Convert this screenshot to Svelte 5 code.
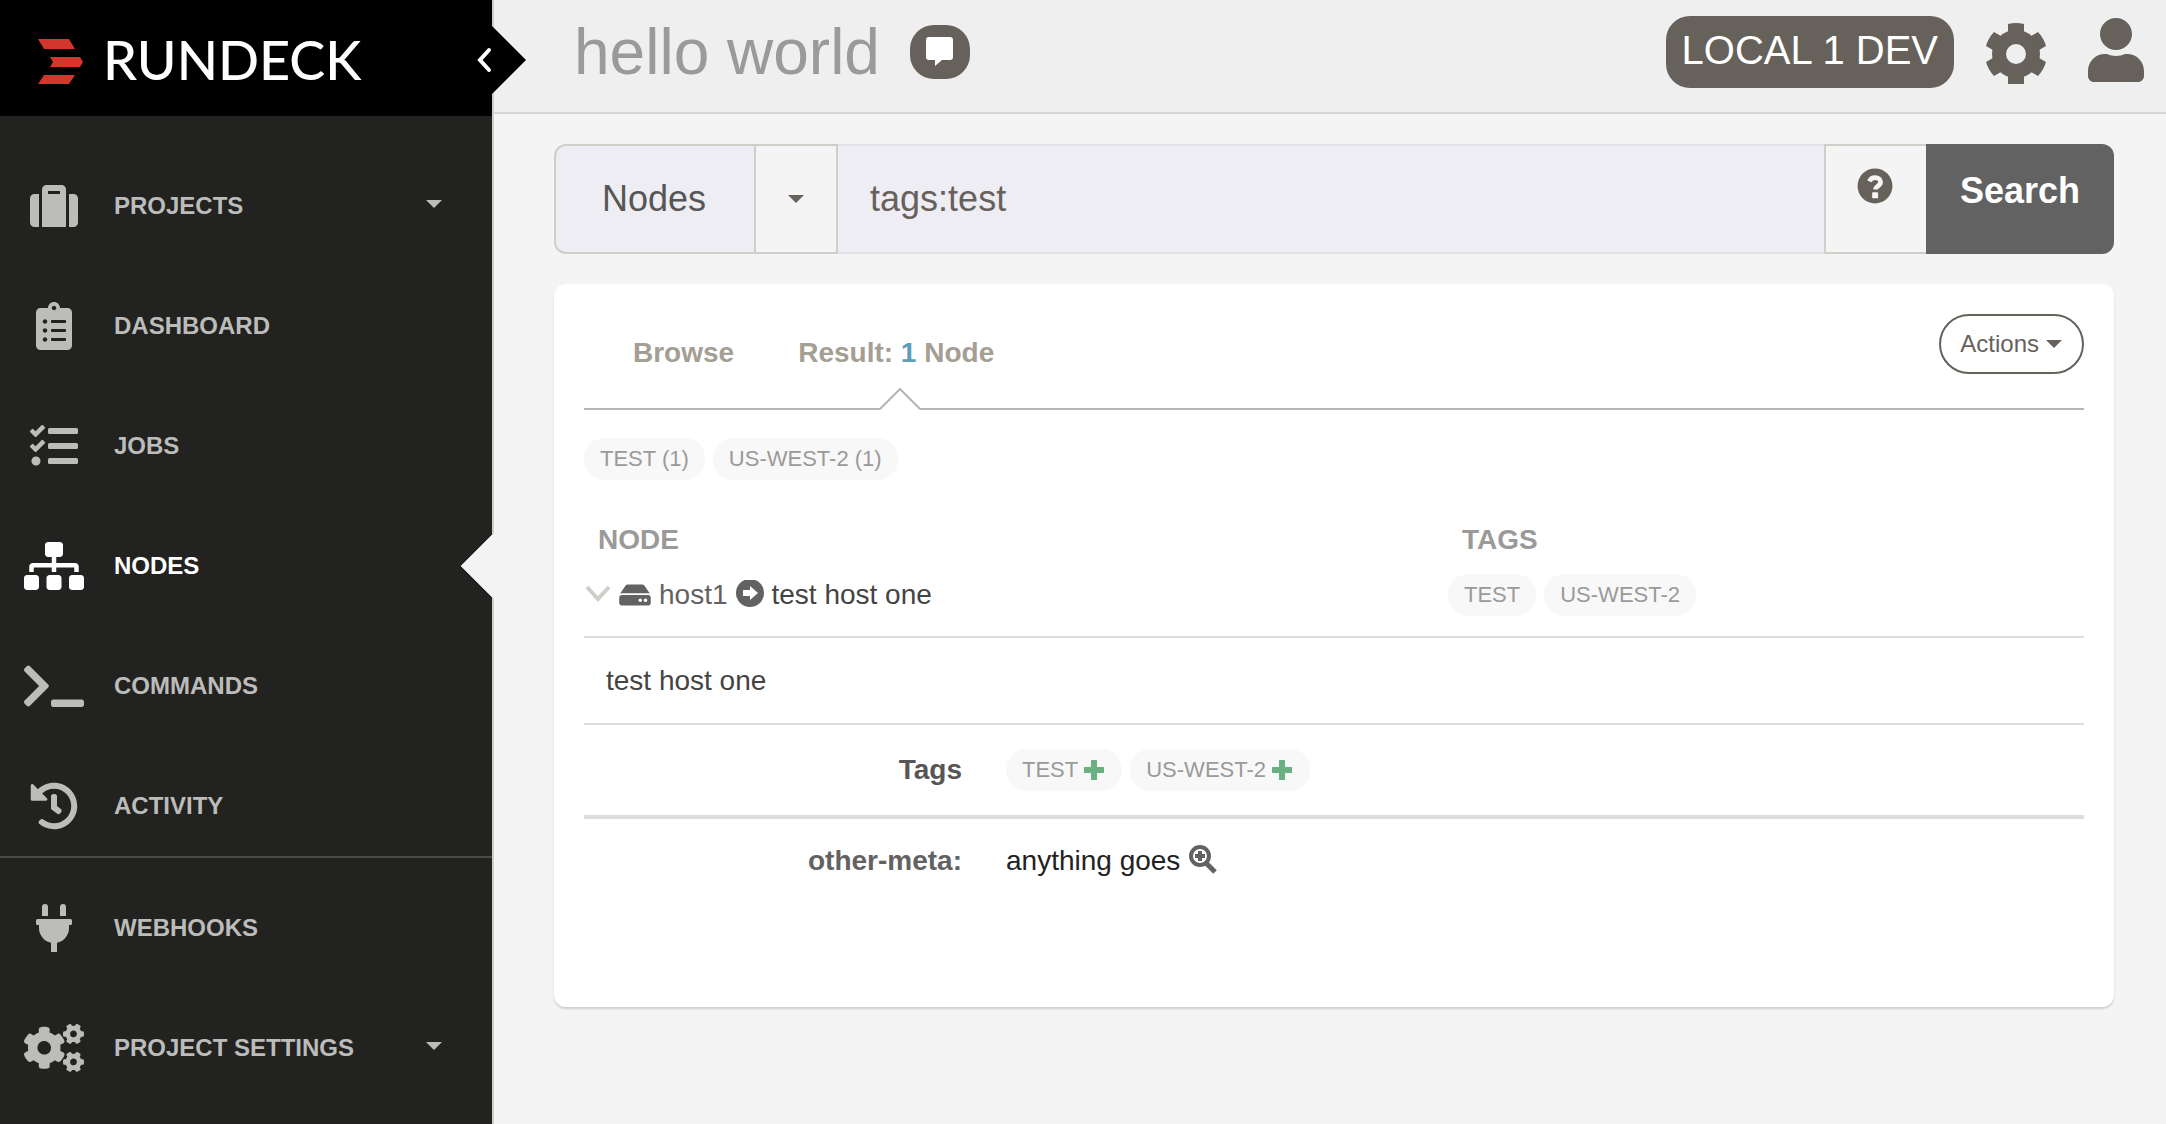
<script>
  const smallCog =
    'M512.1 191l-8.2 14.3c-3 5.3-9.4 7.5-15.1 5.4-11.8-4.4-22.6-10.7-32.1-18.6-4.6-3.8-5.8-10.5-2.8-15.7l8.2-14.3c-6.9-8-12.3-17.3-15.9-27.4h-16.5c-6 0-11.2-4.3-12.2-10.3-2-12-2.1-24.6 0-37.1 1-6 6.2-10.4 12.2-10.4h16.5c3.6-10.1 9-19.4 15.9-27.4l-8.2-14.3c-3-5.2-1.9-11.9 2.8-15.7 9.5-7.9 20.4-14.2 32.1-18.6 5.7-2.1 12.1.1 15.1 5.4l8.2 14.3c10.5-1.9 21.2-1.9 31.7 0L552 6.3c3-5.3 9.4-7.5 15.1-5.4 11.8 4.4 22.6 10.7 32.1 18.6 4.6 3.8 5.8 10.5 2.8 15.7l-8.2 14.3c6.9 8 12.3 17.3 15.9 27.4h16.5c6 0 11.2 4.3 12.2 10.3 2 12 2.1 24.6 0 37.1-1 6-6.2 10.4-12.2 10.4h-16.5c-3.6 10.1-9 19.4-15.9 27.4l8.2 14.3c3 5.2 1.9 11.9-2.8 15.7-9.5 7.9-20.4 14.2-32.1 18.6-5.7 2.1-12.1-.1-15.1-5.4l-8.2-14.3c-10.4 1.9-21.2 1.9-31.7 0zm-10.5-58.8c38.5 29.6 82.4-14.3 52.8-52.8-38.5-29.7-82.4 14.3-52.8 52.8z';

  const projectItems = [
    {
      label: 'Projects',
      menu: true,
      width: 512,
      path: 'M128 480h256V80c0-26.5-21.5-48-48-48H176c-26.5 0-48 21.5-48 48v400zm64-384h128v32H192V96zm320 80v256c0 26.5-21.5 48-48 48h-48V128h48c26.5 0 48 21.5 48 48zM96 480H48c-26.5 0-48-21.5-48-48V176c0-26.5 21.5-48 48-48h48v352z'
    },
    {
      label: 'Dashboard',
      width: 384,
      path: 'M336 64h-80c0-35.3-28.7-64-64-64s-64 28.7-64 64H48C21.5 64 0 85.5 0 112v352c0 26.5 21.5 48 48 48h288c26.5 0 48-21.5 48-48V112c0-26.5-21.5-48-48-48zM96 424c-13.3 0-24-10.7-24-24s10.7-24 24-24 24 10.7 24 24-10.7 24-24 24zm0-96c-13.3 0-24-10.7-24-24s10.7-24 24-24 24 10.7 24 24-10.7 24-24 24zm0-96c-13.3 0-24-10.7-24-24s10.7-24 24-24 24 10.7 24 24-10.7 24-24 24zm96-192c13.3 0 24 10.7 24 24s-10.7 24-24 24-24-10.7-24-24 10.7-24 24-24zm128 368c0 4.4-3.6 8-8 8H168c-4.4 0-8-3.6-8-8v-16c0-4.4 3.6-8 8-8h144c4.4 0 8 3.6 8 8v16zm0-96c0 4.4-3.6 8-8 8H168c-4.4 0-8-3.6-8-8v-16c0-4.4 3.6-8 8-8h144c4.4 0 8 3.6 8 8v16zm0-96c0 4.4-3.6 8-8 8H168c-4.4 0-8-3.6-8-8v-16c0-4.4 3.6-8 8-8h144c4.4 0 8 3.6 8 8v16z'
    },
    {
      label: 'Jobs',
      width: 512,
      path: 'M139.61 35.5a12 12 0 0 0-17 0L58.93 98.81l-22.7-22.12a12 12 0 0 0-17 0L3.53 92.41a12 12 0 0 0 0 17l47.59 47.4a12.78 12.78 0 0 0 17.61 0l15.59-15.62L156.52 69a12.09 12.09 0 0 0 .09-17zm0 159.19a12 12 0 0 0-17 0l-63.68 63.72-22.7-22.1a12 12 0 0 0-17 0L3.53 252a12 12 0 0 0 0 17L51 316.5a12.77 12.77 0 0 0 17.6 0l15.7-15.69 72.2-72.22a12 12 0 0 0 .09-16.9zM64 368c-26.49 0-48.59 21.5-48.59 48S37.53 464 64 464a48 48 0 0 0 0-96zm432 16H208a16 16 0 0 0-16 16v32a16 16 0 0 0 16 16h288a16 16 0 0 0 16-16v-32a16 16 0 0 0-16-16zm0-320H208a16 16 0 0 0-16 16v32a16 16 0 0 0 16 16h288a16 16 0 0 0 16-16V80a16 16 0 0 0-16-16zm0 160H208a16 16 0 0 0-16 16v32a16 16 0 0 0 16 16h288a16 16 0 0 0 16-16v-32a16 16 0 0 0-16-16z'
    },
    {
      label: 'Nodes',
      active: true,
      width: 640,
      path: 'M128 352H32c-17.67 0-32 14.33-32 32v96c0 17.67 14.33 32 32 32h96c17.67 0 32-14.33 32-32v-96c0-17.67-14.33-32-32-32zm-24-80h192v48h48v-48h192v48h48v-57.59c0-21.17-17.23-38.41-38.41-38.41H344v-64h40c17.67 0 32-14.33 32-32V32c0-17.67-14.33-32-32-32H256c-17.67 0-32 14.33-32 32v96c0 17.67 14.33 32 32 32h40v64H94.41C73.23 224 56 241.23 56 262.41V320h48v-48zm264 80h-96c-17.67 0-32 14.33-32 32v96c0 17.67 14.33 32 32 32h96c17.67 0 32-14.33 32-32v-96c0-17.67-14.33-32-32-32zm240 0h-96c-17.67 0-32 14.33-32 32v96c0 17.67 14.33 32 32 32h96c17.67 0 32-14.33 32-32v-96c0-17.67-14.33-32-32-32z'
    },
    {
      label: 'Commands',
      width: 640,
      path: 'M257.981 272.971L63.638 467.314c-9.373 9.373-24.569 9.373-33.941 0L7.029 444.647c-9.357-9.357-9.375-24.522-.04-33.901L161.011 256 6.99 101.255c-9.335-9.379-9.317-24.544.04-33.901l22.667-22.667c9.373-9.373 24.569-9.373 33.941 0L257.981 239.03c9.373 9.372 9.373 24.568 0 33.941zM640 456v-32c0-13.255-10.745-24-24-24H312c-13.255 0-24 10.745-24 24v32c0 13.255 10.745 24 24 24h304c13.255 0 24-10.745 24-24z'
    },
    {
      label: 'Activity',
      width: 512,
      path: 'M504 255.531c.253 136.64-111.18 248.372-247.82 248.468-59.015.042-113.223-20.53-155.822-54.911-11.077-8.94-11.905-25.541-1.839-35.607l11.267-11.267c8.609-8.609 22.353-9.551 31.891-1.984C173.062 425.135 212.781 440 256 440c101.705 0 184-82.311 184-184 0-101.705-82.311-184-184-184-48.814 0-93.149 18.969-126.068 49.932l50.754 50.754c10.08 10.08 2.941 27.314-11.313 27.314H24c-8.837 0-16-7.163-16-16V38.627c0-14.254 17.234-21.393 27.314-11.314l49.372 49.372C129.209 34.136 189.552 8 256 8c136.81 0 247.747 110.78 248 247.531zm-180.912 78.784l9.823-12.63c8.138-10.463 6.253-25.542-4.21-33.679L288 256.349V152c0-13.255-10.745-24-24-24h-16c-13.255 0-24 10.745-24 24v135.651l65.409 50.874c10.463 8.137 25.541 6.253 33.679-4.21z'
    }
  ];

  const settingItems = [
    {
      label: 'Webhooks',
      width: 384,
      path: 'M320 32a32 32 0 0 0-64 0v96h64zm48 128H16A16 16 0 0 0 0 176v32a16 16 0 0 0 16 16h16v32a160.07 160.07 0 0 0 128 156.8V512h64v-99.2A160.07 160.07 0 0 0 352 256v-32h16a16 16 0 0 0 16-16v-32a16 16 0 0 0-16-16zM128 32a32 32 0 0 0-64 0v96h64z'
    },
    {
      label: 'Project Settings',
      menu: true,
      width: 640,
      path:
        'M386.3 286.1l33.7 16.8c10.1 5.8 14.5 18.1 10.5 29.1-8.9 24.2-26.4 46.4-42.6 65.8-7.4 8.9-20.2 11.1-30.3 5.3l-29.1-16.8c-16 13.7-34.6 24.6-54.9 31.7v33.6c0 11.6-8.3 21.6-19.7 23.6-24.6 4.2-50.4 4.4-75.9 0-11.5-2-20-11.9-20-23.6V418c-20.3-7.2-38.9-18-54.9-31.7L74 403c-10 5.8-22.9 3.6-30.3-5.3-16.2-19.4-33.3-41.6-42.2-65.7-4-10.9.4-23.2 10.5-29.1l33.3-16.8c-3.9-20.9-3.9-42.4 0-63.4L12 205.8c-10.1-5.8-14.6-18.1-10.5-29 8.9-24.2 26-46.4 42.2-65.8 7.4-8.9 20.2-11.1 30.3-5.3l29.1 16.8c16-13.7 34.6-24.6 54.9-31.7V57.1c0-11.5 8.2-21.5 19.6-23.5 24.6-4.2 50.5-4.4 76-.1 11.5 2 20 11.9 20 23.6v33.6c20.3 7.2 38.9 18 54.9 31.7l29.1-16.8c10-5.8 22.9-3.6 30.3 5.3 16.2 19.4 33.2 41.6 42.1 65.8 4 10.9.1 23.2-10 29.1l-33.7 16.8c3.9 21 3.9 42.5 0 63.5zm-117.6 21.1c59.2-77-28.7-164.9-105.7-105.7-59.2 77 28.7 164.9 105.7 105.7z' +
        smallCog,
      extra: smallCog
    }
  ];

  const tags = ['TEST', 'US-WEST-2'];
  let filter = $state('tags:test');
</script>

{#snippet navList(items)}
  <ul>
    {#each items as item}
      <li class:active={item.active}>
        <a href="#{item.label}">
          <span class="nav-icon">
            <svg viewBox="0 0 {item.width} 512" height="48" aria-hidden="true">
              <path d={item.path} />
              {#if item.extra}<path d={item.extra} transform="translate(0 299)" />{/if}
            </svg>
          </span>
          <span class="nav-label">{item.label}</span>
          {#if item.menu}<span class="caret"></span>{/if}
        </a>
        {#if item.active}
          <svg class="notch" viewBox="0 0 34 66" width="34" height="66" aria-hidden="true">
            <path d="M34 0L1 33l33 33z" fill="#f4f4f4" />
            <path d="M33 1L1 33l32 32" fill="none" stroke="#cfcfca" />
          </svg>
        {/if}
      </li>
    {/each}
  </ul>
{/snippet}

<div class="app">
  <aside>
    <div class="brand">
      <a href="#home" class="logo">
        <svg viewBox="0 0 46 46" width="46" height="46" fill="#d3362a" aria-hidden="true">
          <path d="M0 0h31l6 10H6zM12 18h30l3 5-3 5H12l3-5zM6 36h31l-6 9H0z" />
        </svg>
        <span>RUNDECK</span>
      </a>
      <button class="collapse" aria-label="Collapse sidebar">
        <svg viewBox="0 0 50 68" width="50" height="68" aria-hidden="true">
          <path d="M16 0l34 34-34 34z" />
          <path d="M13 24L4 34l9 10" fill="none" stroke="#fff" stroke-width="4" stroke-linecap="round" />
        </svg>
      </button>
    </div>
    <nav class="primary">{@render navList(projectItems)}</nav>
    <nav class="secondary">{@render navList(settingItems)}</nav>
  </aside>

  <div class="page">
    <header>
      <h1>hello world</h1>
      <button class="motd" aria-label="Message of the day">
        <svg viewBox="0 0 30 30" width="30" height="30" fill="#fff" aria-hidden="true">
          <path d="M4 0h21a3 3 0 0 1 3 3v17a3 3 0 0 1-3 3h-8l-7 6v-6H4a3 3 0 0 1-3-3V3a3 3 0 0 1 3-3z" />
        </svg>
      </button>
      <span class="server">LOCAL 1 DEV</span>
      <button class="icon-button" aria-label="System settings">
        <svg viewBox="-32 -34 64 64" width="64" height="64" fill="#66615b" aria-hidden="true">
          <circle r="17" fill="none" stroke="#66615b" stroke-width="14" />
          {#each [0, 60, 120, 180, 240, 300] as angle}
            <path d="M-8-21v-9q8-2 16 0v9l3 2h-22z" transform="rotate({angle})" />
          {/each}
        </svg>
      </button>
      <button class="icon-button user" aria-label="User">
        <svg viewBox="0 0 448 544" width="56" height="68" fill="#66615b" aria-hidden="true">
          <path d="M224 256c70.7 0 128-57.3 128-128S294.7 0 224 0 96 57.3 96 128s57.3 128 128 128zm89.6 32h-16.7c-22.2 10.2-46.9 16-72.9 16s-50.6-5.8-72.9-16h-16.7C60.2 288 0 348.2 0 422.4V464c0 26.5 21.5 48 48 48h352c26.5 0 48-21.5 48-48v-41.6c0-74.2-60.2-134.4-134.4-134.4z" />
        </svg>
      </button>
    </header>

    <main>
      <form class="search" onsubmit={(e) => e.preventDefault()}>
        <label for="filter">Nodes</label>
        <button type="button" class="filter-menu" aria-label="Saved filters"><span class="caret"></span></button>
        <input id="filter" type="text" bind:value={filter} />
        <button type="button" class="help" aria-label="Filter help">
          <svg viewBox="0 0 512 512" width="36" height="36" fill="#66615b" aria-hidden="true">
            <path d="M504 256c0 136.997-111.043 248-248 248S8 392.997 8 256C8 119.083 119.043 8 256 8s248 111.083 248 248z" />
            <path d="M176 190c14-34 44-52 82-52 44 0 77 26 77 62 0 56-71 58-71 104" fill="none" stroke="#f4f4f4" stroke-width="68" />
            <rect x="216" y="346" width="84" height="84" rx="8" fill="#f4f4f4" />
          </svg>
        </button>
        <button type="submit" class="submit">Search</button>
      </form>

      <section class="card">
        <div class="tabs">
          <ul>
            <li><a href="#browse">Browse</a></li>
            <li class="current">
              <a href="#result">Result: <b>1</b> Node</a>
              <svg viewBox="0 0 42 22" width="42" height="22" aria-hidden="true">
                <path d="M1 22L21 1l20 21z" fill="#fff" />
                <path d="M1 21L21 1l20 20" fill="none" stroke="#b5b5b5" stroke-width="2" />
              </svg>
            </li>
          </ul>
          <button class="actions">Actions <span class="caret"></span></button>
        </div>

        <div class="chips summary">
          {#each tags as tag}<a class="chip" href="#{tag}">{tag} (1)</a>{/each}
        </div>

        <table class="nodes">
          <thead>
            <tr><th scope="col" class="node-col">NODE</th><th scope="col">TAGS</th></tr>
          </thead>
          <tbody>
            <tr>
              <td>
                <div class="node">
                  <button class="expand" aria-label="Toggle details">
                    <svg viewBox="0 0 28 28" width="28" height="28" aria-hidden="true">
                      <path d="M3 6l11 12L25 6" fill="none" stroke="#cfcfca" stroke-width="4" />
                    </svg>
                  </button>
                  <a href="#host1" class="host">
                    <svg viewBox="0 0 576 512" width="32" height="28" aria-hidden="true">
                      <path d="M576 304v96c0 26.51-21.49 48-48 48H48c-26.51 0-48-21.49-48-48v-96c0-26.51 21.49-48 48-48h480c26.51 0 48 21.49 48 48zm-48-80a79.557 79.557 0 0 1 30.777 6.165L462.25 85.374A48.003 48.003 0 0 0 422.311 64H153.689a48 48 0 0 0-39.938 21.374L17.223 230.165A79.557 79.557 0 0 1 48 224h480zm-48 96c-17.673 0-32 14.327-32 32s14.327 32 32 32 32-14.327 32-32-14.327-32-32-32zm-96 0c-17.673 0-32 14.327-32 32s14.327 32 32 32 32-14.327 32-32-14.327-32-32-32z" />
                    </svg>
                    <span>host1</span>
                  </a>
                  <a href="#filter-host1" class="go" aria-label="Filter by node">
                    <svg viewBox="0 0 28 30" width="28" height="30" aria-hidden="true">
                      <circle cx="14" cy="13" r="14" />
                      <path d="M7 10h7V6l8 7-8 7v-4H7z" fill="#fff" />
                    </svg>
                  </a>
                  <span>test host one</span>
                </div>
              </td>
              <td>
                <div class="chips">
                  {#each tags as tag}<a class="chip" href="#{tag}">{tag}</a>{/each}
                </div>
              </td>
            </tr>
          </tbody>
        </table>

        <p class="description">test host one</p>

        <table class="details">
          <tbody>
            <tr>
              <th scope="row" class="tag-key">Tags</th>
              <td>
                <div class="chips">
                  {#each tags as tag}
                    <a class="chip addable" href="#add-{tag}">
                      {tag}
                      <svg viewBox="0 0 20 20" width="20" height="20" fill="#6bb083" aria-hidden="true">
                        <path d="M7 0h6v7h7v6h-7v7H7v-7H0V7h7z" />
                      </svg>
                    </a>
                  {/each}
                </div>
              </td>
            </tr>
            <tr>
              <th scope="row">other-meta:</th>
              <td>
                <div class="value">
                  <span>anything goes</span>
                  <button class="zoom" aria-label="Filter by value">
                    <svg viewBox="0 0 28 32" width="28" height="32" aria-hidden="true">
                      <circle cx="11" cy="11" r="9" fill="none" stroke="#626262" stroke-width="4" />
                      <path d="M17 18l9 9" stroke="#626262" stroke-width="5" />
                      <path d="M9 6h4v3h3v4h-3v3H9v-3H6V9h3z" fill="#626262" />
                    </svg>
                  </button>
                </div>
              </td>
            </tr>
          </tbody>
        </table>
      </section>
    </main>
  </div>
</div>

<style>
  :global(body) {
    margin: 0;
    background: #f4f4f4;
    font-family: 'Liberation Sans', Arial, Helvetica, sans-serif;
  }

  .app {
    display: flex;
    min-height: 100vh;
    font-size: 28px;
    line-height: 36px;
    color: #444;
  }

  a {
    color: inherit;
    text-decoration: none;
  }

  ul {
    list-style: none;
    margin: 0;
    padding: 0;
  }

  svg {
    display: block;
    flex: none;
  }

  button {
    margin: 0;
    padding: 0;
    border: 0;
    background: none;
    font: inherit;
    color: inherit;
    cursor: pointer;
  }

  .caret {
    display: inline-block;
    border: 8px solid transparent;
    border-top-color: currentColor;
    border-bottom-width: 0;
  }

  aside {
    flex: none;
    box-sizing: border-box;
    width: 494px;
    border-right: 2px solid #cfcfca;
    background: #222220;
    color: #bcbcba;
  }

  .brand {
    position: relative;
    box-sizing: border-box;
    height: 116px;
    padding: 0 38px;
    display: flex;
    align-items: center;
    background: #000;
  }

  .logo {
    display: flex;
    align-items: center;
    gap: 19px;
    padding-top: 8px;
    color: #fff;
    font: 500 54px/56px Lato, sans-serif;
  }

  .logo span {
    padding-bottom: 4px;
  }

  .collapse {
    position: absolute;
    top: 26px;
    right: -34px;
  }

  .primary {
    padding: 48px 0 8px;
    border-bottom: 2px solid #4a4a48;
  }

  .secondary {
    padding-top: 28px;
  }

  nav ul {
    display: grid;
    gap: 36px;
  }

  nav li {
    position: relative;
  }

  nav a {
    display: flex;
    align-items: center;
    height: 84px;
    padding: 0 50px 0 24px;
    font-size: 24px;
    font-weight: bold;
    text-transform: uppercase;
  }

  nav .caret {
    margin-bottom: 4px;
  }

  .nav-icon {
    display: flex;
    justify-content: center;
    width: 60px;
    margin-right: 30px;
  }

  .nav-icon svg {
    fill: currentColor;
  }

  .nav-label {
    flex: 1;
  }

  .active {
    color: #fff;
  }

  .notch {
    position: absolute;
    top: 9px;
    right: -2px;
  }

  .page {
    flex: 1;
    min-width: 0;
  }

  header {
    box-sizing: border-box;
    height: 114px;
    padding: 0 22px 8px 80px;
    display: flex;
    align-items: center;
    gap: 30px;
    border-bottom: 2px solid #d6d6d6;
    background: #efefef;
  }

  h1 {
    margin: 0;
    font-size: 64px;
    font-weight: normal;
    line-height: 72px;
    color: #9a9a9a;
  }

  .motd {
    display: flex;
    justify-content: center;
    align-items: center;
    width: 60px;
    height: 54px;
    border-radius: 24px;
    background: #66615b;
  }

  .server {
    margin-left: auto;
    padding: 10px 16px 14px;
    border-radius: 24px;
    background: #66615b;
    color: #fff;
    font-size: 40px;
    line-height: 48px;
    white-space: nowrap;
  }

  .user {
    margin-left: 10px;
  }

  main {
    padding: 30px 52px 30px 60px;
  }

  .search {
    display: flex;
    height: 110px;
    font-size: 36px;
    line-height: 40px;
    color: #66615b;
  }

  .search label,
  .filter-menu,
  .help {
    box-sizing: border-box;
    display: flex;
    align-items: center;
    justify-content: center;
    border: 2px solid #cfcfca;
  }

  .search label {
    padding: 0 48px 0 46px;
    border-radius: 12px 0 0 12px;
    background: #eeedf3;
    color: #565656;
  }

  .filter-menu {
    width: 82px;
    border-left: 0;
  }

  .search input {
    flex: 1;
    min-width: 0;
    box-sizing: border-box;
    padding: 0 32px;
    border: solid #e3e2e8;
    border-width: 2px 0;
    border-radius: 0;
    outline: 0;
    background: #eeedf3;
    color: inherit;
    font: inherit;
  }

  .help {
    width: 102px;
    align-items: flex-start;
    padding: 22px 2px 0 0;
    border-right: 0;
  }

  .submit {
    display: flex;
    padding: 27px 34px 0;
    border-radius: 0 12px 12px 0;
    background: #626262;
    color: #fff;
    font-weight: bold;
  }

  .card {
    margin-top: 30px;
    padding: 30px 30px 104px;
    border-radius: 12px;
    background: #fff;
    box-shadow: 0 2px 2px rgba(0, 0, 0, 0.15);
  }

  .tabs {
    display: flex;
    justify-content: space-between;
    align-items: flex-start;
    border-bottom: 2px solid #b5b5b5;
  }

  .tabs ul {
    display: flex;
    padding-left: 17px;
    color: #a49e93;
    font-weight: bold;
  }

  .tabs li {
    position: relative;
    padding: 21px 32px 37px;
  }

  .tabs .current {
    padding-right: 40px;
  }

  .tabs b {
    color: #5b9eb5;
  }

  .current svg {
    position: absolute;
    bottom: -2px;
    left: 50%;
    margin-left: -21px;
  }

  .actions {
    display: flex;
    align-items: center;
    gap: 7px;
    height: 60px;
    padding: 0 20px 0 19px;
    border: 2px solid #66615b;
    border-radius: 30px;
    color: #66615b;
    font-size: 24px;
  }

  .chips {
    display: flex;
    gap: 8px;
  }

  .summary {
    margin: 28px 0 42px;
  }

  .chip {
    display: flex;
    align-items: center;
    gap: 6px;
    height: 42px;
    padding: 0 16px;
    border-radius: 20px;
    background: #f8f8f8;
    color: #9a9a9a;
    font-size: 22px;
    white-space: nowrap;
  }

  .addable {
    padding-right: 18px;
  }

  table {
    width: 100%;
    border-collapse: separate;
    border-spacing: 0;
    table-layout: fixed;
  }

  th,
  td {
    box-sizing: border-box;
    padding: 0;
  }

  .nodes th {
    padding-left: 14px;
    text-align: left;
    color: #9a9a9a;
  }

  .nodes .node-col {
    width: 57.6%;
  }

  .nodes td {
    padding: 16px 0 20px;
    border-bottom: 2px solid #ddd;
  }

  .node {
    display: flex;
    align-items: center;
  }

  .host {
    display: flex;
    align-items: center;
    gap: 8px;
    margin: 0 8px 0 7px;
    color: #626262;
  }

  .host svg,
  .go svg {
    fill: #626262;
  }

  .go {
    margin-right: 8px;
  }

  .description {
    margin: 0;
    padding: 25px 22px 24px;
    border-bottom: 2px solid #ddd;
  }

  .details th {
    width: 26%;
    padding-right: 12px;
    text-align: right;
    color: #626262;
  }

  .details .tag-key {
    color: #565656;
  }

  .details th,
  .details td {
    padding-top: 24px;
    padding-bottom: 24px;
  }

  .details td {
    padding-left: 32px;
  }

  .details tr:first-child > * {
    border-bottom: 4px solid #ddd;
  }

  .value {
    display: flex;
    align-items: center;
    gap: 9px;
    color: #222;
  }
</style>
